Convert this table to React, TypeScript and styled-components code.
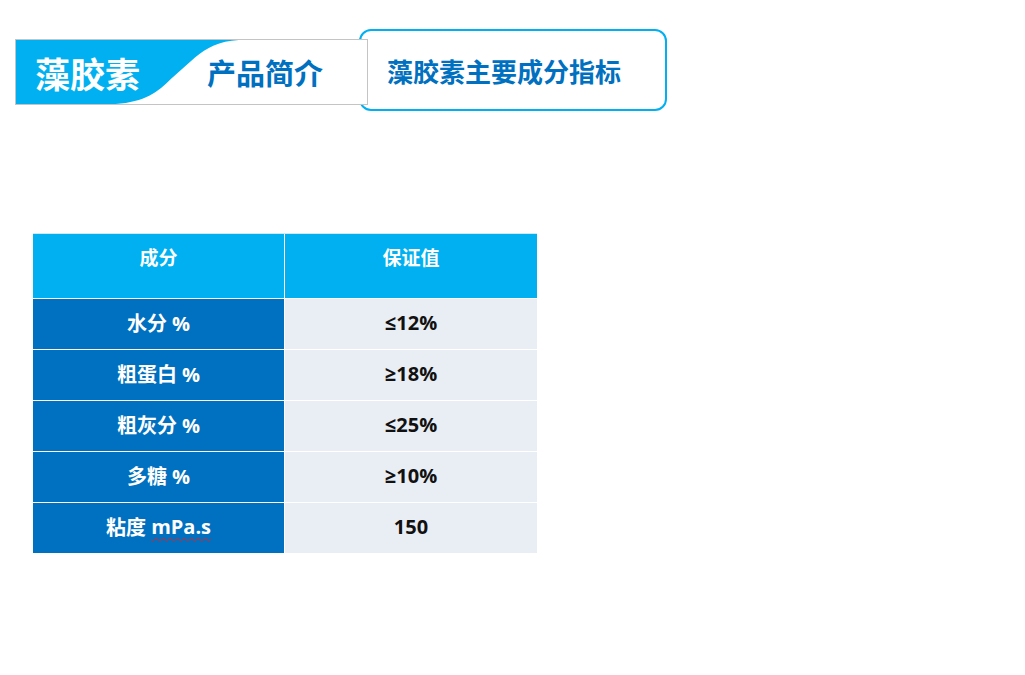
import styled, { createGlobalStyle } from "styled-components";

const GlobalStyle = createGlobalStyle`
  html, body {
    margin: 0;
    padding: 0;
    background: #ffffff;
  }
  body {
    font-family: "Open Sans", "Noto Sans CJK SC", sans-serif;
  }
`;

const Page = styled.div`
  width: 1025px;
  height: 675px;
  padding: 29px 0 0 15px;
  box-sizing: border-box;
  display: flex;
  flex-direction: column;
`;

const Header = styled.div`
  display: flex;
  align-items: flex-start;
  height: 82px;
`;

const SectionTab = styled.div`
  position: relative;
  width: 353px;
  height: 66px;
  box-sizing: border-box;
  border: 1px solid #c4c4c4;
  background: #ffffff;
  display: flex;
  align-items: center;
  margin-top: 10px;
  overflow: hidden;
`;

const TabWave = styled.svg`
  position: absolute;
  left: 0;
  top: 0;
  width: 100%;
  height: 100%;
`;

const BrandName = styled.span`
  position: relative;
  margin-left: 19px;
  width: 150px;
  font-family: "Noto Sans CJK SC", sans-serif;
  font-size: 35px;
  font-weight: 700;
  color: #ffffff;
  line-height: 1;
`;

const SectionName = styled.span`
  position: relative;
  margin-left: 22px;
  font-family: "Noto Sans CJK SC", sans-serif;
  font-size: 29px;
  font-weight: 700;
  color: #0070c0;
  line-height: 1;
`;

const TitleTab = styled.div`
  margin-left: -9px;
  width: 308px;
  height: 82px;
  box-sizing: border-box;
  border: 2px solid #00b0f0;
  border-radius: 12px;
  display: flex;
  align-items: center;
  padding-left: 26px;
  font-family: "Noto Sans CJK SC", sans-serif;
  font-size: 26px;
  font-weight: 700;
  color: #0070c0;
`;

const Table = styled.div`
  margin: 122px 0 0 18px;
  width: 504px;
  display: grid;
  grid-template-columns: 251px 252px;
  grid-template-rows: 64px;
  grid-auto-rows: 50px;
  gap: 1px;
  background: #ffffff;
  border-top: 1px solid #cfe9f7;
`;

const HeadCell = styled.div`
  box-sizing: border-box;
  padding-bottom: 20px;
  background: #00b0f0;
  display: flex;
  align-items: center;
  justify-content: center;
  font-family: "Noto Sans CJK SC", sans-serif;
  font-size: 19px;
  font-weight: 700;
  color: #ffffff;
`;

const Cell = styled.div<{ $label?: boolean }>`
  box-sizing: border-box;
  padding-bottom: 4px;
  background: ${(p) => (p.$label ? "#0070c0" : "#e9edf4")};
  color: ${(p) => (p.$label ? "#ffffff" : "#111111")};
  display: flex;
  align-items: center;
  justify-content: center;
  font-family: "Open Sans", "Noto Sans CJK SC", sans-serif;
  font-size: 20px;
  font-weight: 700;
  white-space: pre;
`;

const Squiggle = styled.span`
  text-decoration: underline wavy #e02020;
  text-decoration-thickness: 1px;
  text-underline-offset: 3px;
`;

const rows = [
  { name: "水分 %", value: "≤12%" },
  { name: "粗蛋白 %", value: "≥18%" },
  { name: "粗灰分 %", value: "≤25%" },
  { name: "多糖 %", value: "≥10%" },
];

const App = () => {
  return (
    <Page>
      <GlobalStyle />
      <Header>
        <SectionTab>
          <TabWave viewBox="0 0 353 66" preserveAspectRatio="none">
            <path
              d="M0 0 H224 C204 1 192 8 180 18 L156 40 C142 54 130 64 100 66 H0 Z"
              fill="#00b0f0"
            />
          </TabWave>
          <BrandName>藻胶素</BrandName>
          <SectionName>产品简介</SectionName>
        </SectionTab>
        <TitleTab>藻胶素主要成分指标</TitleTab>
      </Header>
      <Table>
        <HeadCell>成分</HeadCell>
        <HeadCell>保证值</HeadCell>
        {rows.map((r) => (
          <>
            <Cell $label key={r.name}>{r.name}</Cell>
            <Cell key={r.value}>{r.value}</Cell>
          </>
        ))}
        <Cell $label>
          粘度 <Squiggle>mPa.s</Squiggle>
        </Cell>
        <Cell>150</Cell>
      </Table>
    </Page>
  );
};

export default App;
